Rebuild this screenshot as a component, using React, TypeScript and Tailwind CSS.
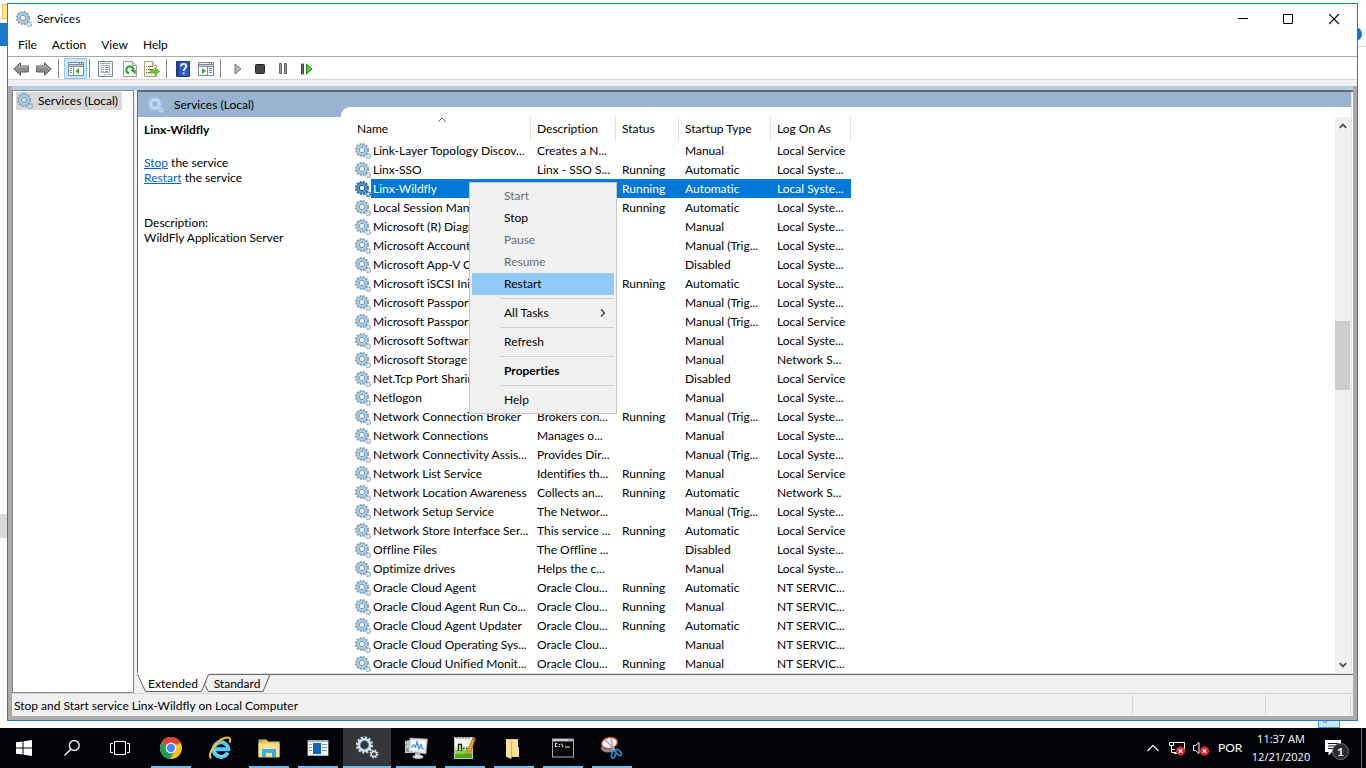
import { ReactNode } from "react";

type Service = {
  name: string;
  description?: string;
  status?: string;
  startup: string;
  logon: string;
};

const services: Service[] = [
  { name: "Link-Layer Topology Discov...", description: "Creates a N...", startup: "Manual", logon: "Local Service" },
  { name: "Linx-SSO", description: "Linx - SSO S...", status: "Running", startup: "Automatic", logon: "Local Syste..." },
  { name: "Linx-Wildfly", status: "Running", startup: "Automatic", logon: "Local Syste..." },
  { name: "Local Session Manager", status: "Running", startup: "Automatic", logon: "Local Syste..." },
  { name: "Microsoft (R) Diagn...", startup: "Manual", logon: "Local Syste..." },
  { name: "Microsoft Account ...", startup: "Manual (Trig...", logon: "Local Syste..." },
  { name: "Microsoft App-V Client", startup: "Disabled", logon: "Local Syste..." },
  { name: "Microsoft iSCSI Initiator", status: "Running", startup: "Automatic", logon: "Local Syste..." },
  { name: "Microsoft Passport", startup: "Manual (Trig...", logon: "Local Syste..." },
  { name: "Microsoft Passport ...", startup: "Manual (Trig...", logon: "Local Service" },
  { name: "Microsoft Software ...", startup: "Manual", logon: "Local Syste..." },
  { name: "Microsoft Storage ...", startup: "Manual", logon: "Network S..." },
  { name: "Net.Tcp Port Sharing ...", startup: "Disabled", logon: "Local Service" },
  { name: "Netlogon", startup: "Manual", logon: "Local Syste..." },
  { name: "Network Connection Broker", description: "Brokers con...", status: "Running", startup: "Manual (Trig...", logon: "Local Syste..." },
  { name: "Network Connections", description: "Manages o...", startup: "Manual", logon: "Local Syste..." },
  { name: "Network Connectivity Assis...", description: "Provides Dir...", startup: "Manual (Trig...", logon: "Local Syste..." },
  { name: "Network List Service", description: "Identifies th...", status: "Running", startup: "Manual", logon: "Local Service" },
  { name: "Network Location Awareness", description: "Collects an...", status: "Running", startup: "Automatic", logon: "Network S..." },
  { name: "Network Setup Service", description: "The Networ...", startup: "Manual (Trig...", logon: "Local Syste..." },
  { name: "Network Store Interface Ser...", description: "This service ...", status: "Running", startup: "Automatic", logon: "Local Service" },
  { name: "Offline Files", description: "The Offline ...", startup: "Disabled", logon: "Local Syste..." },
  { name: "Optimize drives", description: "Helps the c...", startup: "Manual", logon: "Local Syste..." },
  { name: "Oracle Cloud Agent", description: "Oracle Clou...", status: "Running", startup: "Automatic", logon: "NT SERVIC..." },
  { name: "Oracle Cloud Agent Run Co...", description: "Oracle Clou...", status: "Running", startup: "Manual", logon: "NT SERVIC..." },
  { name: "Oracle Cloud Agent Updater", description: "Oracle Clou...", status: "Running", startup: "Automatic", logon: "NT SERVIC..." },
  { name: "Oracle Cloud Operating Sys...", description: "Oracle Clou...", startup: "Manual", logon: "NT SERVIC..." },
  { name: "Oracle Cloud Unified Monit...", description: "Oracle Clou...", status: "Running", startup: "Manual", logon: "NT SERVIC..." },
];

const columns = [
  { label: "Name", width: "w-[176px]", pad: "pl-0.5" },
  { label: "Description", width: "w-[85px]", pad: "pl-1.5" },
  { label: "Status", width: "w-[63px]", pad: "pl-1.5" },
  { label: "Startup Type", width: "w-[92px]", pad: "pl-1.5" },
  { label: "Log On As", width: "w-[80px]", pad: "pl-1.5" },
];

const SELECTED = "Linx-Wildfly";

function Gears({ className = "size-4", selected = false, pale = false }: { className?: string; selected?: boolean; pale?: boolean }) {
  const rim = selected ? "#17568f" : pale ? "#a9cbe4" : "#7896ae";
  const body = selected ? "#4f93d0" : pale ? "#c3dff2" : "#abcfe8";
  return (
    <svg viewBox="0 0 16 16" className={`${className} shrink-0`} fill="none">
      <circle cx="7" cy="7" r="6.1" stroke={rim} strokeWidth="1.8" strokeDasharray="1.9 1.293" />
      <circle cx="7" cy="7" r="4.3" stroke={body} strokeWidth="2.8" />
      <circle cx="7" cy="7" r="5.5" stroke={rim} strokeWidth="0.6" />
      <circle cx="7" cy="7" r="2.7" stroke={rim} />
      <circle cx="13.2" cy="13.2" r="2.3" stroke={rim} strokeWidth="1.3" strokeDasharray="1.1 0.7" />
      <circle cx="13.2" cy="13.2" r="1.5" stroke={body} strokeWidth="1.1" />
    </svg>
  );
}

function Arrow({ flip = false }: { flip?: boolean }) {
  return (
    <svg viewBox="0 0 16 14" className={flip ? "h-3.5 w-4 -scale-x-100" : "h-3.5 w-4"}>
      <path d="M0.7 7 7.5 0.8V4h7.8v6H7.5v3.2z" fill="#8e8e8e" stroke="#5e5e5e" />
      <path d="M2.5 7 6.5 3.3V5h7.8" fill="none" stroke="#bcbcbc" />
    </svg>
  );
}

function TreeIcon() {
  return (
    <svg viewBox="0 0 16 14" className="h-3.5 w-4">
      <path d="M0 0h16v14H0z" fill="#7f8b99" />
      <path d="M1 1h10v1H1zM12 1h1v1h-1zM14 1h1v1h-1z" fill="#e8edf2" />
      <path d="M1 3h14v1H1z" fill="#c9d0d8" />
      <path d="M1 5h4v8H1zM6 5h9v8H6z" fill="#fff" />
      <path d="M2 6h2v1H2zM2 8h2v1H2zM2 10h2v1H2z" fill="#6f8db0" />
      <path d="M11 6v6L7.5 9z" fill="#34a52c" />
    </svg>
  );
}

function ActionPaneIcon() {
  return (
    <svg viewBox="0 0 16 14" className="h-3.5 w-4">
      <path d="M0 0h16v14H0z" fill="#7f8b99" />
      <path d="M1 1h10v1H1zM12 1h1v1h-1zM14 1h1v1h-1z" fill="#e8edf2" />
      <path d="M1 3h14v1H1z" fill="#c9d0d8" />
      <path d="M1 5h8v8H1zM10 5h5v8h-5z" fill="#fff" />
      <path d="M11 6h3v1h-3zM11 8h3v1h-3zM11 10h3v1h-3z" fill="#6f8db0" />
      <path d="M4 6v6l4-3z" fill="#34a52c" />
    </svg>
  );
}

function PropertiesIcon() {
  return (
    <svg viewBox="0 0 16 16" className="size-4">
      <path d="M.5.5h14v15H.5z" fill="#f4f6f8" stroke="#7f8790" />
      <path d="M2 2h11v1H2z" fill="#a3adb8" />
      <path d="M3.5 4.5h8v7h-8z" fill="#fff" stroke="#a4b1bf" />
      <path d="M5 6h1v1H5zM7 6h4v1H7zM5 8h1v1H5zM7 8h4v1H7zM5 10h1v1H5zM7 10h3v1H7z" fill="#6f8db0" />
      <path d="M6 13h3v1H6zM10 13h3v1h-3z" fill="#a3adb8" />
    </svg>
  );
}

function RefreshIcon() {
  return (
    <svg viewBox="0 0 14 16" className="h-4 w-3.5">
      <path d="M.5.5h9l4 4v11H.5z" fill="#fafafa" stroke="#9a9a9a" />
      <path d="M9.5.5v4h4" fill="#e4e4e4" stroke="#9a9a9a" />
      <path d="M6 12.3A3.5 3.5 0 1 1 10.3 9" fill="none" stroke="#2fa32b" strokeWidth="2" />
      <path d="M7 8.8h5.6v4.8z" fill="#2fa32b" />
    </svg>
  );
}

function ExportIcon() {
  return (
    <svg viewBox="0 0 16 16" className="size-4">
      <path d="M.5.5h8l4 4v11H.5z" fill="#fbf6dc" stroke="#a8a489" />
      <path d="M8.5.5v4h4" fill="#eee7c0" stroke="#a8a489" />
      <path d="M2 5h1v1H2zM2 8h1v1H2zM2 11h1v1H2zM4 5h5v1H4zM4 8h5v1H4zM4 11h4v1H4z" fill="#6d6a5c" />
      <path d="M6.5 9H11V6.5l4.5 4-4.5 4V12H6.5z" fill="#6cc72e" stroke="#4ca51c" strokeWidth="0.6" />
    </svg>
  );
}

function HelpIcon() {
  return (
    <svg viewBox="0 0 14 16" className="h-4 w-3.5">
      <path d="M.5.5h13v15H.5z" fill="#3159bd" stroke="#1d3580" />
      <path d="M1 1h2v14H1z" fill="#20409a" />
      <path d="M5 5.4c0-3.6 5.2-3.3 5.2-.3 0 2.2-2.5 2.2-2.5 4.9M7.7 11.5v1.8" fill="none" stroke="#fff" strokeWidth="1.7" />
    </svg>
  );
}

function Divider() {
  return <span className="h-[19px] w-px bg-[#858585]" />;
}

function ToolButton({ label, className, children }: { label: string; className: string; children: ReactNode }) {
  return (
    <button aria-label={label} className={`flex h-[21px] shrink-0 items-center justify-center ${className}`}>
      {children}
    </button>
  );
}

function Toolbar() {
  return (
    <div className="flex h-[24px] items-center border-y border-t-[#a9a9a9] border-b-[#d5d5d5] bg-white pl-[5px] pt-px">
      <ToolButton label="Back" className="w-4"><Arrow /></ToolButton>
      <ToolButton label="Forward" className="ml-[7px] mr-1.5 w-4"><Arrow flip /></ToolButton>
      <Divider />
      <ToolButton label="Show console tree" className="ml-[5px] w-[23px] border border-[#90c8f6] bg-[#cce8ff]"><TreeIcon /></ToolButton>
      <span className="ml-0.5 h-[19px] w-px bg-[#858585]" />
      <ToolButton label="Properties" className="ml-2 w-4"><PropertiesIcon /></ToolButton>
      <ToolButton label="Refresh" className="ml-2 w-4"><RefreshIcon /></ToolButton>
      <ToolButton label="Export list" className="mx-1.5 w-4"><ExportIcon /></ToolButton>
      <Divider />
      <ToolButton label="Help" className="ml-2 w-4"><HelpIcon /></ToolButton>
      <ToolButton label="Show action pane" className="ml-[7px] mr-1.5 w-4"><ActionPaneIcon /></ToolButton>
      <Divider />
      <ToolButton label="Start service" className="ml-[9px] w-4">
        <svg viewBox="0 0 8 12" className="h-3 w-2"><path d="M1 1v10l6-5z" fill="#b9b9b9" stroke="#777" /></svg>
      </ToolButton>
      <ToolButton label="Stop service" className="ml-1.5 w-4">
        <svg viewBox="0 0 12 12" className="size-3"><rect x="1.5" y="1.5" width="9" height="9" rx="1" fill="#454545" stroke="#222" /></svg>
      </ToolButton>
      <ToolButton label="Pause service" className="ml-[7px] w-4">
        <svg viewBox="0 0 8 11" className="h-[11px] w-2"><path d="M.5.5h2v10h-2zM5.5.5h2v10h-2z" fill="#999" stroke="#666" /></svg>
      </ToolButton>
      <ToolButton label="Restart service" className="ml-2 w-4">
        <svg viewBox="0 0 12 12" className="size-3">
          <path d="M.5 1h2v10h-2z" fill="#777" stroke="#444" />
          <path d="M5.5 1v10L11 6z" fill="#55c92f" stroke="#238a12" />
        </svg>
      </ToolButton>
    </div>
  );
}

function TitleBar() {
  return (
    <div className="flex h-[30px] shrink-0 items-center bg-white pl-2">
      <Gears />
      <h1 className="ml-[5px] flex-1">Services</h1>
      <button aria-label="Minimize" className="flex h-full w-[46px] items-center justify-center">
        <svg viewBox="0 0 11 11" className="size-[11px]"><path d="M0 4.5h10" stroke="#000" /></svg>
      </button>
      <button aria-label="Maximize" className="flex h-full w-[45px] items-center justify-center">
        <svg viewBox="0 0 11 11" className="size-[11px]"><path d="M.5.5h9v9h-9z" fill="none" stroke="#000" /></svg>
      </button>
      <button aria-label="Close" className="flex h-full w-[46px] items-center justify-center">
        <svg viewBox="0 0 11 11" className="size-[11px]"><path d="M0 0l10 10M10 0 0 10" stroke="#000" strokeWidth="1.1" /></svg>
      </button>
    </div>
  );
}

function MenuItem({ label, disabled = false, className = "" }: { label: string; disabled?: boolean; className?: string }) {
  return (
    <button
      role="menuitem"
      disabled={disabled}
      className={`flex h-[22px] items-center justify-between pl-8 pr-2 text-left disabled:text-[#6d6d6d] ${className}`}
    >
      {label}
      {label === "All Tasks" && (
        <svg viewBox="0 0 6 8" className="h-2 w-1.5"><path d="M1 .5 4.5 4 1 7.5" fill="none" stroke="#333" strokeWidth="1.2" /></svg>
      )}
    </button>
  );
}

function MenuLine() {
  return <div role="separator" className="my-[3px] ml-7 h-px bg-[#d0d0d0]" />;
}

function ContextMenu() {
  return (
    <div role="menu" className="absolute left-[114px] top-[65px] flex w-[148px] flex-col border border-[#c8c8c8] bg-[#f1f1f1] p-0.5">
      <MenuItem label="Start" disabled />
      <MenuItem label="Stop" />
      <MenuItem label="Pause" disabled />
      <MenuItem label="Resume" disabled />
      <MenuItem label="Restart" className="bg-[#91c9f7]" />
      <MenuLine />
      <MenuItem label="All Tasks" />
      <MenuLine />
      <MenuItem label="Refresh" />
      <MenuLine />
      <MenuItem label="Properties" className="font-bold" />
      <MenuLine />
      <MenuItem label="Help" />
    </div>
  );
}

function ServiceTable() {
  return (
    <table className="w-[496px] table-fixed border-collapse whitespace-nowrap text-left leading-[19px]">
      <thead>
        <tr className="h-6">
          {columns.map((c) => (
            <th key={c.label} className={`relative p-0 font-normal ${c.width}`}>
              <button className={`block h-6 w-full border-r border-[#e2e2e2] pb-0.5 text-left ${c.pad}`}>{c.label}</button>
              {c.label === "Name" && (
                <svg viewBox="0 0 8 5" className="absolute left-[83px] top-0 h-[5px] w-2">
                  <path d="M.5 4.5 4 1l3.5 3.5" fill="none" stroke="#555" />
                </svg>
              )}
            </th>
          ))}
        </tr>
      </thead>
      <tbody>
        {services.map((s) => {
          const on = s.name === SELECTED;
          const cell = on ? "bg-[#0078d7] p-0 pl-1.5 text-white" : "p-0 pl-1.5";
          return (
            <tr key={s.name} className="h-[19px]" aria-selected={on}>
              <td className="p-0">
                <div className="flex h-[19px] items-center">
                  <Gears selected={on} />
                  <span className={on ? "flex-1 bg-[#0078d7] pl-0.5 text-white" : "flex-1 pl-0.5"}>{s.name}</span>
                </div>
              </td>
              <td className={cell}>{s.description}</td>
              <td className={cell}>{s.status}</td>
              <td className={cell}>{s.startup}</td>
              <td className={cell}>{s.logon}</td>
            </tr>
          );
        })}
      </tbody>
    </table>
  );
}

function ScrollBar() {
  return (
    <div className="flex w-4 flex-col bg-[#f0f0f0]">
      <button aria-label="Scroll up" className="flex h-[17px] items-center justify-center">
        <svg viewBox="0 0 8 6" className="h-1.5 w-2"><path d="M.7 4.8 4 1.5l3.3 3.3" fill="none" stroke="#505050" strokeWidth="1.8" /></svg>
      </button>
      <div className="grow-[187]" />
      <div className="mr-px grow-[69] bg-[#cdcdcd]" />
      <div className="grow-[265]" />
      <button aria-label="Scroll down" className="flex h-[17px] items-center justify-center">
        <svg viewBox="0 0 8 6" className="h-1.5 w-2"><path d="M.7 1.2 4 4.5l3.3-3.3" fill="none" stroke="#505050" strokeWidth="1.8" /></svg>
      </button>
    </div>
  );
}

function ViewTabs() {
  return (
    <div className="relative h-5 shrink-0 bg-[#f0f0f0]">
      <div className="h-px bg-[#e3e3e3]" />
      <div className="h-px bg-[#696969]" />
      <svg viewBox="0 0 136 20" className="absolute left-0 top-0 h-5 w-[136px]">
        <path d="M0 0h72l-7 19H8z" fill="#fff" />
        <path d="M.5 1 8.5 18.5h56l7-17M69 8.500l-1.500 3 4 7H126L133 1.500" fill="none" stroke="#5a5a5a" />
      </svg>
      <div role="tablist" className="absolute left-0 top-px flex h-5 items-center">
        <button role="tab" aria-selected className="w-[72px] text-center">Extended</button>
        <button role="tab" aria-selected={false} className="w-[56px] text-center">Standard</button>
      </div>
    </div>
  );
}

function MainPane() {
  return (
    <main className="ml-[3px] flex min-w-0 flex-1 flex-col">
      <section className="flex min-h-0 flex-1 border-l border-t-2 border-[#696969] bg-[#99b4d1]">
        <div className="flex w-[203px] shrink-0 flex-col">
          <div className="flex h-[25px] items-center pl-2.5">
            <Gears pale />
            <h2 className="ml-2.5">Services (Local)</h2>
          </div>
          <div className="flex-1 bg-white pl-1.5 pt-[5px] leading-[15px]">
            <h3 className="font-bold">Linx-Wildfly</h3>
            <p className="mt-[18px]"><a href="#stop" className="text-[#0066cc] underline">Stop</a> the service</p>
            <p><a href="#restart" className="text-[#0066cc] underline">Restart</a> the service</p>
            <p className="mt-[30px]">Description:</p>
            <p>WildFly Application Server</p>
          </div>
        </div>
        <div className="flex min-w-0 flex-1 flex-col pt-[15px]">
          <div className="flex min-h-0 flex-1 rounded-tl-[9px] bg-white pt-2.5">
            <div className="relative ml-3.5 min-w-0 flex-1">
              <ServiceTable />
              <ContextMenu />
            </div>
            <ScrollBar />
          </div>
        </div>
        <div className="w-0.5 border-l border-[#e3e3e3] bg-white" />
      </section>
      <ViewTabs />
    </main>
  );
}

function ServicesWindow() {
  return (
    <div className="relative ml-[7px] mr-2 mt-[3px] flex min-h-0 flex-1 flex-col border border-[#1a7bd0] bg-[#f0f0f0]">
      <TitleBar />
      <nav className="flex h-[22px] shrink-0 items-center gap-[15px] bg-white pl-2.5">
        <button>File</button>
        <button>Action</button>
        <button>View</button>
        <button>Help</button>
      </nav>
      <Toolbar />
      <div className="mt-1.5 flex min-h-0 flex-1 flex-col border-x-4 border-b-4 border-[#ababab]">
        <div className="h-1 shrink-0 bg-[#b4cee6]" />
        <div className="flex min-h-0 flex-1">
          <aside className="w-[122px] shrink-0 border border-[#828790] bg-white pl-[3px] pt-px">
            <button className="flex h-[18px] items-center bg-[#d9d9d9] pl-px pr-1">
              <Gears />
              <span className="ml-[5px] whitespace-nowrap">Services (Local)</span>
            </button>
          </aside>
          <MainPane />
        </div>
        <footer className="flex h-[23px] shrink-0 items-center border-t border-[#d7d7d7] px-0.5">
          <span className="flex-1 pt-0.5">Stop and Start service Linx-Wildfly on Local Computer</span>
          <span className="h-5 w-[133px] border-l border-[#d7d7d7]" />
          <span className="h-5 w-[86px] border-x border-[#d7d7d7]" />
        </footer>
      </div>
    </div>
  );
}

function Chrome() {
  return (
    <svg viewBox="0 0 24 24" className="size-6">
      <circle cx="12" cy="12" r="11" fill="#fbc116" />
      <path d="M12 12 2.5 6.5a11 11 0 0 1 19 0z" fill="#dc4437" />
      <path d="M12 1a11 11 0 0 1 9.5 5.5H12z" fill="#dc4437" />
      <path d="M2.5 6.5A11 11 0 0 0 11 23l5.5-9L12 12z" fill="#1b9e5a" />
      <circle cx="12" cy="12" r="5.4" fill="#fff" />
      <circle cx="12" cy="12" r="4.2" fill="#4587f3" />
    </svg>
  );
}

function Explorer() {
  return (
    <svg viewBox="0 0 24 24" className="size-6">
      <path d="M1.5 3.5h8l1.5 2h11.5v16h-21z" fill="#ecc35b" />
      <path d="M2.5 4.5h3v1h-3z" fill="#55b44b" />
      <path d="M1.5 7.5h21v13h-21z" fill="#fce093" />
      <path d="M5 21v-8h14v8h-4v-4H9v4z" fill="#35b0e4" />
    </svg>
  );
}

function InternetExplorer() {
  return (
    <svg viewBox="0 0 24 24" className="size-6" fill="none">
      <path d="M19.7 16.5a7.3 7.3 0 1 1 .6-3.3H7" stroke="#55c8f5" strokeWidth="4" />
      <path d="M18 18A7.5 7.5 0 0 1 6 13.5" stroke="#a5e6ff" />
      <path d="M3.5 22C-2 20.500 8 4 17.500 1.800c5-1.200 5.500 2 4 5" stroke="#f5c227" strokeWidth="2" />
    </svg>
  );
}

function ConsoleApp() {
  return (
    <svg viewBox="0 0 24 24" className="size-6">
      <path d="M1.5 4h21v16h-21z" fill="#a9b2bb" />
      <path d="M2 6h20v13H2z" fill="#f5f7f9" />
      <path d="M7 7h8v11H7z" fill="#0b66c3" />
      <path d="M3 8h3v1H3zM3 11h3v1H3zM3 14h3v1H3zM16 8h5v1h-5zM16 11h5v1h-5zM16 14h5v1h-5z" fill="#8796a5" />
    </svg>
  );
}

function TaskGears() {
  return (
    <svg viewBox="0 0 24 24" className="size-6" fill="none">
      <circle cx="9.5" cy="9" r="7.5" stroke="#cbd9e7" strokeWidth="2.4" strokeDasharray="2.2 1.725" />
      <circle cx="9.5" cy="9" r="5.7" stroke="#cfe1f1" strokeWidth="2.6" />
      <circle cx="9.5" cy="9" r="4.3" stroke="#86a3bd" strokeWidth=".8" />
      <circle cx="19" cy="18" r="3.6" stroke="#bed3e6" strokeWidth="1.8" strokeDasharray="1.7 1.13" />
      <circle cx="19" cy="18" r="2.5" stroke="#d8e7f4" strokeWidth="1.3" />
    </svg>
  );
}

function Monitor() {
  return (
    <svg viewBox="0 0 24 24" className="size-6">
      <path d="M1 5l10-2v14H1z" fill="#c5c8c6" />
      <path d="M1 7.5h2v2H1z" fill="#5fb346" />
      <path d="M2 12h4v4H2z" fill="#92979a" />
      <path d="M6 2l17.5 1L22 18 4.5 15.5z" fill="#dfe2e1" stroke="#9b9f9d" strokeWidth=".6" />
      <path d="M7.5 4l14 .8-1 11-14-2z" fill="#f7fbff" />
      <path d="M7.5 12l2-3 2 2L13 6l2 7 2-4 1.5 4h2" fill="none" stroke="#2f8fd4" strokeWidth="1.2" />
      <path d="M11 17h5l.5 3H11z" fill="#b3b6b4" />
      <ellipse cx="14" cy="20.8" rx="5.5" ry="2" fill="#dcdedd" />
    </svg>
  );
}

function NotepadPlus() {
  return (
    <svg viewBox="0 0 24 24" className="size-6">
      <path d="M1 1h19v22H1z" fill="#f4f7ef" />
      <path d="M2 10h17v12H2z" fill="#d3efab" />
      <path d="M2 14h17v8H2z" fill="#8ad13f" />
      <path d="M2 18h17v4H2z" fill="#47ab16" />
      <path d="M1.5 1.5h18v21h-18z" fill="none" stroke="#c3c7ba" />
      <path d="M4 1v2M7 1v2M10 1v2M13 1v2M16 1v2" stroke="#777" />
      <path d="M5.5 15V8.5h3V15M10 12.5h1.500M13 12.5h1.500" fill="none" stroke="#222" strokeWidth="1.3" />
      <path d="M20 1.5l2.5 1L17 17l-3 2.5V16z" fill="#f0a429" stroke="#99600c" strokeWidth=".7" />
      <path d="M20 1.5l2.5 1-.8 2-2.5-1z" fill="#d95252" />
    </svg>
  );
}

function Folder() {
  return (
    <svg viewBox="0 0 24 24" className="size-6">
      <path d="M4 3h12v8l1 1v9H4z" fill="#f3cf75" />
      <path d="M9 4h7v7l1 1v8H9z" fill="#fde08f" />
      <path d="M4 3l5 2.500V23l-5-2.500z" fill="#fbe09a" />
      <path d="M9 5.500V23l1-2V5z" fill="#dcb254" />
    </svg>
  );
}

function CommandPrompt() {
  return (
    <svg viewBox="0 0 24 24" className="size-6">
      <path d="M1 2.5h22v19H1z" fill="#a9adb0" />
      <path d="M2 3.5h15v1H2z" fill="#e7eaec" />
      <path d="M2 5.5h20v15H2z" fill="#060606" />
      <path d="M6.5 7.5h-2v3h2M8.5 8v1M8.5 10v1M10.5 7.5 12 11M14 11h5" fill="none" stroke="#ddd" strokeWidth="1.1" />
    </svg>
  );
}

function SnippingTool() {
  return (
    <svg viewBox="0 0 24 24" className="size-6" fill="none">
      <ellipse cx="8" cy="12" rx="7" ry="4.5" fill="#8b8b8b" />
      <ellipse cx="9.5" cy="7" rx="8" ry="5.5" transform="rotate(-12 9.5 7)" fill="#f7f4f4" stroke="#d03a42" strokeWidth="1.4" />
      <path d="M5.5 4l10 10.5M11 2.5l2.500 12" stroke="#a0a9b3" strokeWidth="1.6" />
      <ellipse cx="13.5" cy="18.5" rx="2" ry="3.7" transform="rotate(15 13.5 18.5)" stroke="#1d8ed0" strokeWidth="1.6" />
      <ellipse cx="18.5" cy="16.5" rx="2" ry="3.7" transform="rotate(-45 18.5 16.5)" stroke="#1d8ed0" strokeWidth="1.6" />
    </svg>
  );
}

const apps = [
  { label: "Google Chrome", icon: <Chrome />, running: true },
  { label: "Internet Explorer", icon: <InternetExplorer />, running: false },
  { label: "File Explorer", icon: <Explorer />, running: true },
  { label: "Server Console", icon: <ConsoleApp />, running: true },
  { label: "Services", icon: <TaskGears />, running: true, active: true },
  { label: "Resource Monitor", icon: <Monitor />, running: true },
  { label: "Notepad++", icon: <NotepadPlus />, running: true },
  { label: "Folder", icon: <Folder />, running: true },
  { label: "Command Prompt", icon: <CommandPrompt />, running: true },
  { label: "Snipping Tool", icon: <SnippingTool />, running: true },
];

function ErrorBadge() {
  return (
    <>
      <circle cx="12.5" cy="11" r="4.7" fill="#d9222c" />
      <path d="M10.7 9.2l3.6 3.6M14.3 9.2l-3.6 3.6" stroke="#fff" strokeWidth="1.3" />
    </>
  );
}

function Taskbar() {
  return (
    <div className="mt-[7px] flex h-10 shrink-0 items-center bg-[#010308] text-white">
      <button aria-label="Start" className="flex h-10 w-12 items-center justify-center">
        <svg viewBox="0 0 16 16" className="size-4">
          <path d="M0 2.3 6.5 1.4v6.100H0zM7.500 1.200 16 0v7.500H7.500zM0 8.500h6.500v6.100L0 13.700zM7.500 8.500H16V16l-8.500-1.200z" fill="#fff" />
        </svg>
      </button>
      <button aria-label="Search" className="flex h-10 w-12 items-center justify-center">
        <svg viewBox="0 0 16 16" className="size-4" fill="none" stroke="#fff" strokeWidth="1.3">
          <circle cx="10.3" cy="5.5" r="4.9" />
          <path d="M6.8 9.2.5 15.5" />
        </svg>
      </button>
      <button aria-label="Task View" className="flex h-10 w-12 items-center justify-center">
        <svg viewBox="0 0 20 14" className="h-3.5 w-5" fill="none" stroke="#fff">
          <path d="M4.5.5h11v13h-11zM3 2.5H.5v9H3M17 2.5h2.5v9H17" />
        </svg>
      </button>
      <div className="ml-[3px] flex gap-px">
        {apps.map((a) => (
          <button
            key={a.label}
            aria-label={a.label}
            className={a.active ? "flex h-10 w-12 flex-col items-center bg-[#35363a] pt-2" : "flex h-10 w-12 flex-col items-center pt-2"}
          >
            {a.icon}
            {a.running && <span className={a.active ? "mt-1.5 h-0.5 w-12 bg-[#76b9ed]" : "mt-1.5 h-0.5 w-10 bg-[#76b9ed]"} />}
          </button>
        ))}
      </div>
      <div className="ml-auto flex items-center">
        <button aria-label="Show hidden icons">
          <svg viewBox="0 0 12 8" className="h-2 w-3"><path d="M.5 7 6 1.3 11.5 7" fill="none" stroke="#fff" strokeWidth="1.2" /></svg>
        </button>
        <button aria-label="Network" className="ml-[9px]">
          <svg viewBox="0 0 18 16" className="h-4 w-[18px]">
            <path d="M5.5 2.5h11V10h-7M1.5 2.5h4v3h-4zM3.5 5.5v7H8M3.5 9.5H7M6 13.5h3" fill="none" stroke="#fff" />
            <ErrorBadge />
          </svg>
        </button>
        <button aria-label="Volume" className="ml-1.5">
          <svg viewBox="0 0 18 16" className="h-4 w-[18px]">
            <path d="M1.5 5.5h2l3.5-3v11l-3.500-3h-2z" fill="none" stroke="#fff" />
            <ErrorBadge />
          </svg>
        </button>
        <button className="ml-2 w-6 text-center">POR</button>
        <button className="ml-2 w-[62px] whitespace-nowrap text-center font-['Open_Sans',sans-serif] text-[11px] leading-[18px]">
          11:37 AM
          <br />
          12/21/2020
        </button>
        <button aria-label="Notifications" className="relative ml-[13px] h-6 w-6">
          <svg viewBox="0 0 17 16" className="h-4 w-[17px]">
            <path d="M0 0h16v12H7l-3.5 3.5V12H0z" fill="#fff" />
            <path d="M3 3.5h10M3 6h10M3 8.500h7" stroke="#111" />
          </svg>
          <span className="absolute left-[7px] top-[7px] flex size-[17px] items-center justify-center rounded-full border border-[#777] bg-[#2c2c2c] text-[12px] font-bold">1</span>
        </button>
        <span className="ml-3 mr-1 h-10 w-px bg-[#6b6c6f]" />
      </div>
    </div>
  );
}

// Parts of the windows that stay visible behind the console
function BackgroundWindows() {
  return (
    <>
      <div className="absolute left-0.5 top-1 h-[15px] w-3 border border-[#e5bf4a] bg-[#ffe694]" />
      <div className="absolute left-0 top-[23px] h-[23px] w-3 bg-[#1979ca]" />
      <div className="absolute left-0 top-[514px] h-6 w-3 bg-[#d9d9d9]" />
      <div className="absolute right-0 top-[46px] h-px w-3 bg-[#d5d5d5]" />
      <div className="absolute right-1 top-[27px] size-[14px] rounded-full bg-[#0b78d4]" />
      <div className="absolute bottom-10 right-[26px] h-3 w-[22px] border border-[#2e9bd8] bg-[#cbe8f6]">
        <div className="ml-1 mt-0.5 h-1 w-1 border border-[#999]" />
      </div>
    </>
  );
}

export default function App() {
  return (
    <div className="relative flex h-screen flex-col overflow-hidden bg-white font-[Lato,'Open_Sans',sans-serif] text-[12px] leading-[18px] text-black [font-variant-ligatures:none]">
      <BackgroundWindows />
      <ServicesWindow />
      <Taskbar />
    </div>
  );
}
